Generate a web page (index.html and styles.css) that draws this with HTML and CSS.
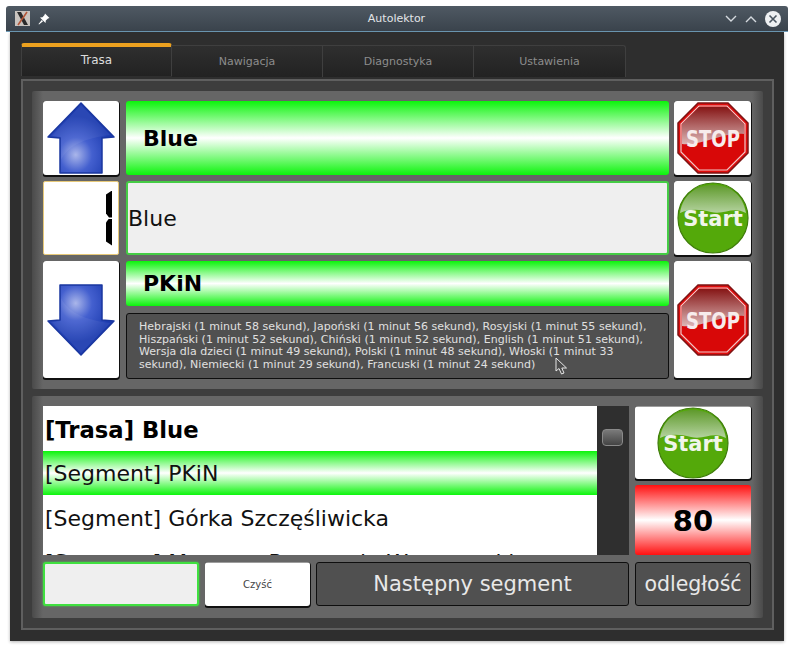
FILE: index.html
```html
<!DOCTYPE html>
<html lang="pl">
<head>
    <meta charset="UTF-8">
    <title>Autolektor</title>
    <link rel="stylesheet" href="styles.css">
</head>
<body>
    <!-- Shared icons -->
    <svg class="defs" width="0" height="0">
        <defs>
            <radialGradient id="blueFill" cx="0.42" cy="0.74" r="0.55">
                <stop offset="0" stop-color="#aab6ea"/>
                <stop offset="0.45" stop-color="#4460cf"/>
                <stop offset="1" stop-color="#1d3cb0"/>
            </radialGradient>
            <linearGradient id="redGloss" x1="0" y1="0" x2="0" y2="1">
                <stop offset="0" stop-color="#861616"/>
                <stop offset="1" stop-color="#dcb6b6"/>
            </linearGradient>
            <linearGradient id="greenGloss" x1="0" y1="0" x2="0" y2="1">
                <stop offset="0" stop-color="#5f9a2c"/>
                <stop offset="1" stop-color="#b5d3a0"/>
            </linearGradient>
            <symbol id="arrowUp" viewBox="0 0 68 72">
                <path d="M34 1 L67 35 L55 36 L55 71 L13 71 L13 36 L1 35 Z" fill="url(#blueFill)" stroke="#1a37a0" stroke-width="1.5" stroke-linejoin="round"/>
                <path d="M34 3 L63 33 C40 36 22 42 14 58 L14 35 L5 34 Z" fill="#fff" opacity="0.06"/>
            </symbol>
            <symbol id="stopSign" viewBox="0 0 72 72">
                <path d="M21 1 H51 L71 21 V51 L51 71 H21 L1 51 V21 Z" fill="#e00c0c" stroke="#7c1414" stroke-width="1.5"/>
                <path d="M22 4 H50 L68 22 V50 L50 68 H22 L4 50 V22 Z" fill="#d80808" stroke="#f0c8c8" stroke-width="1.2"/>
                <path d="M22 5 H50 L67 22 V32 C46 30 26 44 5 42 V22 Z" fill="url(#redGloss)"/>
                <text x="36" y="45" textLength="54" lengthAdjust="spacingAndGlyphs" class="icon-stop">STOP</text>
            </symbol>
            <symbol id="startBall" viewBox="0 0 72 72">
                <circle cx="36" cy="36" r="35" fill="#54a90a" stroke="#3f7d0a" stroke-width="1.2"/>
                <path d="M3 31 C6 12 20 3 36 3 C52 3 66 12 69 31 C55 24 48 33 34 30 C22 27 12 27 3 31 Z" fill="url(#greenGloss)"/>
                <text x="36" y="44" class="icon-start">Start</text>
            </symbol>
        </defs>
    </svg>

    <div class="window">
        <div class="titlebar">
            <div class="title-left">
                <svg class="app-icon" width="15" height="15" viewBox="0 0 15 15">
                    <rect width="15" height="15" fill="#c9c4bf"/>
                    <path d="M2 1 L6 1 L13 14 L9 14 Z" fill="#2b2b2b"/>
                    <path d="M12 1 L3 14" stroke="#b5583a" stroke-width="1.6"/>
                </svg>
                <svg width="12" height="12" viewBox="0 0 12 12">
                    <path d="M7 0.5 L11.5 5 L10 5.5 L7.8 7.5 L7.5 10 L2 4.5 L4.5 4.2 L6.5 2 Z M3.8 7 L5 8.2 L1 11.5 L0.5 11 Z" fill="#fff"/>
                </svg>
            </div>
            <div class="title-text">Autolektor</div>
            <div class="title-right">
                <svg width="12" height="8" viewBox="0 0 12 8"><path d="M1 1 L6 6 L11 1" fill="none" stroke="#d5dadf" stroke-width="1.4"/></svg>
                <svg width="12" height="8" viewBox="0 0 12 8"><path d="M1 7 L6 2 L11 7" fill="none" stroke="#d5dadf" stroke-width="1.4"/></svg>
                <svg width="16" height="16" viewBox="0 0 16 16">
                    <circle cx="8" cy="8" r="8" fill="#eef0f2"/>
                    <path d="M4.5 4.5 L11.5 11.5 M11.5 4.5 L4.5 11.5" stroke="#4a5560" stroke-width="1.6"/>
                </svg>
            </div>
        </div>

        <div class="content">
            <div class="tabs">
                <div class="tab active">Trasa</div>
                <div class="tab">Nawigacja</div>
                <div class="tab">Diagnostyka</div>
                <div class="tab last">Ustawienia</div>
            </div>

            <div class="pane">
                <!-- Route panel -->
                <div class="group route">
                    <button class="btn-white"><svg width="68" height="72"><use href="#arrowUp"/></svg></button>
                    <div class="bar bar-tall">Blue</div>
                    <button class="btn-white"><svg width="72" height="72"><use href="#stopSign"/></svg></button>

                    <div class="lcd"><span class="seg seg-top"></span><span class="seg seg-bottom"></span></div>
                    <div class="field field-text">Blue</div>
                    <button class="btn-white"><svg width="72" height="72"><use href="#startBall"/></svg></button>

                    <button class="btn-white"><svg class="flip" width="68" height="72"><use href="#arrowUp"/></svg></button>
                    <div class="next-col">
                        <div class="bar bar-short">PKiN</div>
                        <div class="info">Hebrajski (1 minut 58 sekund), Japoński (1 minut 56 sekund), Rosyjski (1 minut 55 sekund), Hiszpański (1 minut 52 sekund), Chiński (1 minut 52 sekund), English (1 minut 51 sekund), Wersja dla dzieci (1 minut 49 sekund), Polski (1 minut 48 sekund), Włoski (1 minut 33 sekund), Niemiecki (1 minut 29 sekund), Francuski (1 minut 24 sekund)
                            <svg class="cursor" width="13" height="19" viewBox="0 0 13 19">
                                <path d="M1 1 L1 14 L4 11.5 L6.5 17 L9 16 L6.8 11 L11.5 11 Z" fill="#4d4d4d" stroke="#e8e8e8" stroke-width="1"/>
                            </svg>
                        </div>
                    </div>
                    <button class="btn-white"><svg width="72" height="72"><use href="#stopSign"/></svg></button>
                </div>

                <!-- Segment list panel -->
                <div class="group segments">
                    <div class="list">
                        <div class="list-item title">[Trasa] Blue</div>
                        <div class="list-item current">[Segment] PKiN</div>
                        <div class="list-item">[Segment] Górka Szczęśliwicka</div>
                        <div class="list-item">[Segment] Muzeum Powstania Warszawskiego</div>
                    </div>
                    <div class="scrollbar"><div class="thumb"></div></div>
                    <div class="side-col">
                        <button class="btn-white"><svg width="72" height="72"><use href="#startBall"/></svg></button>
                        <div class="speed">80</div>
                    </div>
                    <div class="bottom-row">
                        <div class="field field-empty"></div>
                        <button class="btn-white btn-clear">Czyść</button>
                        <button class="btn-dark btn-next">Następny segment</button>
                    </div>
                    <button class="btn-dark btn-distance">odległość</button>
                </div>
            </div>
        </div>
    </div>
</body>
</html>
```

FILE: styles.css
```css
* {
    margin: 0;
    padding: 0;
    box-sizing: border-box;
}
body {
    font-family: "DejaVu Sans", sans-serif;
    background-color: #fff;
    width: 800px;
    height: 656px;
    overflow: hidden;
    padding: 6px 12px 0 6px;
}
button {
    font-family: inherit;
}
.defs {
    position: absolute;
}
.icon-stop {
    font-family: "DejaVu Sans", sans-serif;
    font-weight: bold;
    font-size: 23px;
    fill: #f7ecec;
    text-anchor: middle;
}
.icon-start {
    font-family: "DejaVu Sans", sans-serif;
    font-weight: bold;
    font-size: 21px;
    fill: #f0f5ea;
    text-anchor: middle;
}
.flip {
    transform: scaleY(-1);
}

/* Window frame */
.window {
    width: 782px;
}
.titlebar {
    height: 26px;
    background: linear-gradient(#4f5963, #3a434c);
    border-bottom: 1px solid #6f9cb8;
    border-radius: 3px 3px 0 0;
    display: flex;
    align-items: center;
    justify-content: space-between;
    padding: 0 7px 0 9px;
}
.title-left, .title-right {
    display: flex;
    align-items: center;
    gap: 8px;
}
.title-text {
    flex: 1;
    text-align: center;
    color: #e2e5e8;
    font-size: 11px;
    padding-left: 18px;
}
.content {
    margin: 0 4px;
    height: 609px;
    background-color: #2e2e2e;
    padding: 11px 10px 0 11px;
    box-shadow: 0 1px 3px rgba(0, 0, 0, 0.3);
}

/* Tabs */
.tabs {
    display: flex;
    height: 36px;
    align-items: flex-end;
}
.tab {
    width: 151px;
    height: 32px;
    margin-bottom: 2px;
    background: linear-gradient(#2f2f2f, #222);
    border-top: 1px solid #3f3f3f;
    border-right: 1px solid #3f3f3f;
    color: #8d8d8d;
    font-size: 11px;
    display: flex;
    align-items: center;
    justify-content: center;
}
.tab.last {
    width: 152px;
    border-radius: 0 3px 0 0;
}
.tab.active {
    height: 33px;
    margin-bottom: 3px;
    border-top: 4px solid #eca11f;
    border-left: 1px solid #3f3f3f;
    border-radius: 3px 3px 0 0;
    color: #dcdcdc;
    font-size: 12px;
    padding-bottom: 4px;
}
.pane {
    height: 551px;
    width: 753px;
    border: 2px solid #5f5f5f;
    background-color: #3d3d3d;
    padding: 10px 9px;
    display: flex;
    flex-direction: column;
    gap: 7px;
}

/* Panels */
.group {
    background: linear-gradient(90deg, #4a4a4a, #666 1.5%, #666 98.5%, #4a4a4a);
    border-radius: 2px;
    padding: 10px 12px 10px 11px;
}
.route {
    height: 299px;
    display: grid;
    grid-template-columns: 77px 543px 77px;
    grid-template-rows: 74px 74px 117px;
    gap: 6px;
}
.route > :nth-child(3n+1) {
    margin-right: 1px;
}
.route > :nth-child(3n) {
    margin-left: -1px;
    margin-right: 1px;
}
.segments {
    height: 222px;
    display: grid;
    grid-template-columns: 554px 32px 116px;
    grid-template-rows: 149px 44px;
    row-gap: 7px;
}

/* Buttons and fields */
.btn-white {
    background-color: #fff;
    border: none;
    border-radius: 3px;
    box-shadow: 0 1px 0 1px #111;
    display: flex;
    align-items: center;
    justify-content: center;
    clip-path: inset(0 -2px -2px 0);
}
.btn-dark {
    background-color: #505050;
    border: 1px solid #0e0e0e;
    border-radius: 3px;
    color: #e8e8e8;
    font-size: 21px;
}
.bar {
    background: linear-gradient(#0cf40c, #fff 50%, #0cf40c);
    border-radius: 3px;
    font-weight: bold;
    font-size: 22px;
    color: #000;
    display: flex;
    align-items: center;
    padding-left: 17px;
}
.bar-short {
    height: 45px;
    flex-shrink: 0;
}
.field {
    background-color: #efefef;
    border: 2px solid #45cc45;
    border-radius: 3px;
    color: #111;
    font-size: 22px;
    display: flex;
    align-items: center;
}
.lcd {
    background-color: #fff;
    border: 1px solid #e6c878;
    border-radius: 2px;
    display: flex;
    flex-direction: column;
    align-items: flex-end;
    justify-content: center;
    gap: 1px;
    padding-right: 6px;
}
.seg {
    display: block;
    width: 6px;
    height: 27px;
    background-color: #000;
}
.seg-top {
    clip-path: polygon(100% 0, 100% 100%, 50% 100%, 0 85%, 0 15%);
}
.seg-bottom {
    clip-path: polygon(50% 0, 100% 0, 100% 100%, 0 85%, 0 15%);
}
.next-col {
    display: flex;
    flex-direction: column;
    gap: 7px;
}
.info {
    flex: 1;
    background-color: #505050;
    border: 1px solid #0e0e0e;
    border-radius: 3px;
    color: #e0e0e0;
    font-size: 11px;
    letter-spacing: 0.035px;
    line-height: 12.5px;
    padding: 7px 12px;
    position: relative;
}
.cursor {
    position: absolute;
    left: 428px;
    top: 43px;
}

/* Segment list */
.list {
    background-color: #fff;
    overflow: hidden;
}
.list-item {
    height: 44.5px;
    font-size: 22px;
    color: #111;
    display: flex;
    align-items: center;
    padding-left: 2px;
    padding-top: 1px;
    white-space: nowrap;
}
.list-item.title {
    font-weight: bold;
    font-size: 22.7px;
    color: #000;
    padding-top: 2px;
}
.list-item.current {
    background: linear-gradient(#0cf40c, #fff 50%, #0cf40c);
}
.scrollbar {
    background-color: #2f2f2f;
    padding: 23px 6px 0 5px;
}
.thumb {
    height: 17px;
    background: linear-gradient(#7a7a7a, #444);
    border: 1px solid #8a8a8a;
    border-radius: 4px;
}
.side-col {
    display: grid;
    grid-template-rows: 73px 70px;
    row-gap: 6px;
    width: 116px;
    margin-left: 6px;
}
.speed {
    background: linear-gradient(#ff1010, #fff 50%, #ff1010);
    border-radius: 3px;
    font-weight: bold;
    font-size: 29px;
    color: #000;
    display: flex;
    align-items: center;
    justify-content: center;
    padding-top: 2px;
}
.bottom-row {
    grid-column: 1 / 3;
    display: flex;
    gap: 6px;
}
.field-empty {
    width: 156px;
    border-color: #40e040;
    box-shadow: 0 0 2px #45e045;
}
.btn-clear {
    width: 105px;
    font-size: 10px;
    color: #444;
}
.btn-next {
    width: 313px;
}
.btn-distance {
    margin-left: 6px;
    width: 116px;
    font-size: 20.5px;
}
```
